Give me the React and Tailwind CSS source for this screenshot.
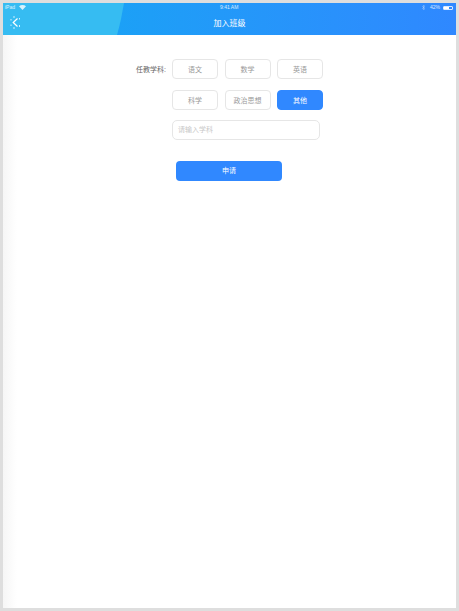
import React from 'react';

const FONT = { fontFamily: '"Liberation Sans", "Noto Sans CJK SC", sans-serif' };

const SUBJECTS = [
  { name: '语文' },
  { name: '数学' },
  { name: '英语' },
  { name: '科学' },
  { name: '政治思想' },
  { name: '其他', active: true },
];

const StatusBar = () => (
  <div className="relative flex h-[9px] items-center justify-between pl-[2px] pr-[3px] text-[5px] leading-none text-white/80">
    <div className="flex items-center gap-[4px]">
      <span>iPad</span>
      <svg width="7" height="5" viewBox="0 0 7 5">
        <path d="M0 1.2 C2 -0.4 5 -0.4 7 1.2 L3.5 5 Z" fill="#ffffff" fillOpacity="0.8" />
      </svg>
    </div>
    <span className="absolute left-[217px] top-[2px]">9:41 AM</span>
    <div className="flex items-center gap-[3px]">
      <svg width="3" height="5" viewBox="0 0 3 5">
        <path d="M0 1 L3 3.6 L1.5 5 V0 L3 1.4 L0 4" fill="none" stroke="#ffffff" strokeOpacity="0.5" strokeWidth="0.5" />
      </svg>
      <span className="ml-[2px]">42%</span>
      <div className="h-[4px] w-[10px] rounded-[1px] border-[0.5px] border-white/80">
        <div className="h-full w-[5px] bg-white" />
      </div>
    </div>
  </div>
);

export default function App() {
  return (
    <div className="h-[611px] w-[459px] bg-[#dedede] pb-[3px] pl-[3px] pr-[3px] pt-[3px] text-[#666]" style={FONT}>
      <div className="flex h-[605px] w-[453px] flex-col bg-white">
        {/* Header */}
        <div className="relative h-[32px] shrink-0 overflow-hidden bg-gradient-to-r from-[#11a8f3] to-[#2f88ff]">
          <svg className="absolute left-0 top-0" width="124" height="32" viewBox="0 0 124 32">
            <path d="M0 0 H121 C119 11 117 22 114 32 H0 Z" fill="#36bcf2" />
          </svg>
          <StatusBar />
          <div className="relative flex h-[23px] items-center justify-center text-[8px] text-white">
            <button className="absolute left-[6px] top-[4px] h-[13px] w-[12px]">
              <svg width="12" height="13" viewBox="0 0 12 13" fill="none">
                <path d="M8.5 2.5 L4.2 6.5 L8.5 10.5" stroke="#ffffff" strokeWidth="1.2" />
                <path d="M4 1 H6 M2 3 V4.5 M2 8.5 V10 M4 12 H6 M10.5 2 V3.5 M10.5 9 V11" stroke="#ffffff" strokeOpacity="0.85" strokeWidth="0.9" />
              </svg>
            </button>
            加入班级
          </div>
        </div>

        {/* Body */}
        <div className="flex-1 bg-gradient-to-r from-[#f6f6f6] from-0% to-white to-[14px]">
          <div className="flex pt-[24px]">
            <div className="w-[169px] shrink-0 pr-[6px] pt-[6px] text-right text-[7px] leading-[10px] text-[#666]">
              任教学科:
            </div>
            <div className="flex-1">
              <div className="grid w-[151px] grid-cols-[46px_46px_46px] gap-x-[6.5px] gap-y-[11px]">
                {SUBJECTS.map((s) => (
                  <button
                    key={s.name}
                    className={`flex h-[20px] items-center justify-center rounded-[4px] border pt-[2px] text-[7px] ${
                      s.active ? 'border-[#3088ff] bg-[#3088ff] text-white' : 'border-[#e6e6e6] bg-white text-[#999]'
                    }`}
                  >
                    {s.name}
                  </button>
                ))}
              </div>
              <div className="mt-[10px] flex h-[20px] w-[148px] items-center rounded-[5px] border border-[#e6e6e6] pl-[5px] pt-[1px] text-[7px] text-[#c8c8c8]">
                请输入学科
              </div>
            </div>
          </div>
          <button className="ml-[173px] mt-[21px] flex h-[20px] w-[106px] items-center justify-center rounded-[4px] bg-[#3088ff] pt-[1px] text-[7px] text-white">
            申请
          </button>
        </div>
      </div>
    </div>
  );
}
